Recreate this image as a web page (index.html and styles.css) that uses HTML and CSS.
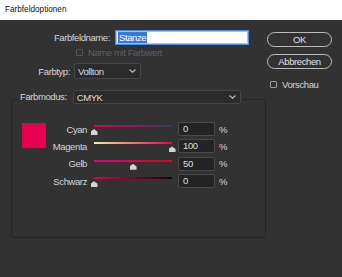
FILE: index.html
```html
<!DOCTYPE html>
<html lang="de">

<head>
  <meta charset="UTF-8" />
  <title>Farbfeldoptionen</title>
  <link rel="stylesheet" href="styles.css">
</head>

<body>
  <div class="titlebar">Farbfeldoptionen</div>

  <div class="dialog">
    <div class="main">
      <div class="name-row">
        <label class="lbl name-lbl">Farbfeldname:</label>
        <div class="text-input"><span class="sel">Stanze</span></div>
      </div>

      <div class="check-row disabled">
        <span class="check"></span>
        <span>Name mit Farbwert</span>
      </div>

      <div class="type-row">
        <label class="lbl type-lbl">Farbtyp:</label>
        <div class="select type-select">
          <span>Vollton</span>
          <svg class="chev" width="7" height="4" viewBox="0 0 7 4"><path d="M0.5 0.5 L3.5 3.2 L6.5 0.5" fill="none" stroke="#b8b8b8" stroke-width="1.2"/></svg>
        </div>
      </div>

      <fieldset class="group">
        <legend>
          <span class="lbl">Farbmodus:</span>
          <div class="select mode-select">
            <span>CMYK</span>
            <svg class="chev" width="7" height="4" viewBox="0 0 7 4"><path d="M0.5 0.5 L3.5 3.2 L6.5 0.5" fill="none" stroke="#b8b8b8" stroke-width="1.2"/></svg>
          </div>
        </legend>

        <div class="mix">
          <div class="swatch"></div>
          <div class="sliders">
            <div class="slider-row">
              <span class="lbl slider-lbl">Cyan</span>
              <div class="track cyan"><span class="thumb" style="left: 0%"></span></div>
              <div class="num">0</div>
              <span class="pct">%</span>
            </div>
            <div class="slider-row">
              <span class="lbl slider-lbl">Magenta</span>
              <div class="track magenta"><span class="thumb" style="left: 100%"></span></div>
              <div class="num">100</div>
              <span class="pct">%</span>
            </div>
            <div class="slider-row">
              <span class="lbl slider-lbl">Gelb</span>
              <div class="track gelb"><span class="thumb" style="left: 50%"></span></div>
              <div class="num">50</div>
              <span class="pct">%</span>
            </div>
            <div class="slider-row">
              <span class="lbl slider-lbl">Schwarz</span>
              <div class="track schwarz"><span class="thumb" style="left: 0%"></span></div>
              <div class="num">0</div>
              <span class="pct">%</span>
            </div>
          </div>
        </div>
      </fieldset>
    </div>

    <div class="side">
      <button class="btn">OK</button>
      <button class="btn">Abbrechen</button>
      <div class="check-row preview">
        <span class="check"></span>
        <span>Vorschau</span>
      </div>
    </div>
  </div>
</body>

</html>
```

FILE: styles.css
```css
body {
  margin: 0;
  padding: 0;
  width: 342px;
  height: 277px;
  overflow: hidden;
  background-color: #323232;
  font-family: 'Liberation Sans', sans-serif;
  font-size: 9.5px;
  letter-spacing: -0.4px;
  color: #d6d6d6;
}

.titlebar {
  height: 20px;
  background-color: #fff;
  color: #111;
  font-size: 8.2px;
  letter-spacing: 0;
  line-height: 20px;
  padding-left: 5px;
}

.dialog {
  display: flex;
  padding-top: 10px;
}

.main {
  margin-left: 11px;
  width: 255px;
}

.lbl {
  white-space: nowrap;
}

/* top rows */
.name-row,
.type-row {
  display: flex;
  align-items: center;
}

.name-lbl {
  width: 99px;
  text-align: right;
  margin-right: 5px;
}

.text-input {
  box-sizing: border-box;
  width: 134px;
  height: 15px;
  background-color: #fff;
  border: 1px solid #4a8fdc;
  box-shadow: inset 0 0 0 1px #9cc4ee;
  padding-left: 2px;
  display: flex;
  align-items: center;
}

.sel {
  background-color: #3a78d6;
  color: #fff;
  line-height: 11px;
  padding: 0 1px;
}

.check-row {
  display: flex;
  align-items: center;
  height: 10px;
}

.check-row.disabled {
  margin: 2px 0 0 65px;
  color: #5e5e5e;
}

.check {
  box-sizing: border-box;
  width: 7px;
  height: 7px;
  border: 1px solid #9a9a9a;
  border-radius: 1px;
  margin-right: 5px;
}

.disabled .check {
  border-color: #545454;
}

.type-row {
  margin-top: 6px;
}

.type-lbl {
  width: 59px;
  text-align: right;
  margin-right: 4px;
}

.select {
  box-sizing: border-box;
  height: 16px;
  background-color: #2b2b2b;
  border: 1px solid #464646;
  border-radius: 2px;
  display: flex;
  align-items: center;
  justify-content: space-between;
  padding: 0 4px 0 3px;
  color: #dcdcdc;
}

.type-select {
  width: 67px;
}

/* group box */
.group {
  margin: 11px 0 0 0;
  padding: 0;
  width: 255px;
  height: 148px;
  box-sizing: border-box;
  border: 1px solid #262626;
  border-radius: 2px;
}

.group legend {
  display: flex;
  align-items: flex-start;
  margin-left: 7px;
  padding: 0 2px 5px 1px;
}

.group legend .lbl {
  line-height: 14px;
  margin-right: 6px;
}

.mode-select {
  width: 168px;
  height: 14px;
}

.mix {
  display: flex;
  margin-top: 14px;
  padding-left: 10px;
}

.swatch {
  width: 24px;
  height: 25px;
  background-color: #e6004f;
}

.sliders {
  display: flex;
  flex-direction: column;
  gap: 3.4px;
  margin-top: -1px;
}

.slider-row {
  display: flex;
  align-items: center;
  height: 14px;
}

.slider-lbl {
  width: 41px;
  text-align: right;
  margin-right: 7px;
}

.track {
  position: relative;
  width: 78px;
  height: 2px;
  align-self: flex-start;
  margin-top: 3px;
  margin-right: 6px;
}

.track.cyan {
  background: linear-gradient(to right, #e6004f, #3a3468);
}

.track.magenta {
  background: linear-gradient(to right, #f7ec9a, #e6004f);
}

.track.gelb {
  background: linear-gradient(to right, #e5007e, #e2001e);
}

.track.schwarz {
  background: linear-gradient(to right, #e6004f, #1e0006);
}

.thumb {
  position: absolute;
  top: 4px;
  width: 7px;
  height: 6px;
  margin-left: -3.5px;
  background-color: #d4d4d4;
  clip-path: polygon(50% 0, 100% 45%, 100% 100%, 0 100%, 0 45%);
}

.num {
  box-sizing: border-box;
  width: 37px;
  height: 14px;
  background-color: #242424;
  border: 1px solid #4a4a4a;
  border-radius: 2px;
  padding-left: 4px;
  line-height: 12px;
  color: #dedede;
}

.pct {
  margin-left: 4px;
}

/* buttons */
.side {
  margin-left: 1px;
  margin-top: 2px;
  width: 65px;
  display: flex;
  flex-direction: column;
}

.btn {
  box-sizing: border-box;
  height: 15px;
  margin-bottom: 7px;
  border: 1.5px solid #bcbcbc;
  border-radius: 8px;
  background: transparent;
  color: #e0e0e0;
  font-family: inherit;
  font-size: 9.5px;
  letter-spacing: -0.4px;
  padding: 0;
  line-height: 12px;
}

.check-row.preview {
  margin: 3px 0 0 3px;
}
```
